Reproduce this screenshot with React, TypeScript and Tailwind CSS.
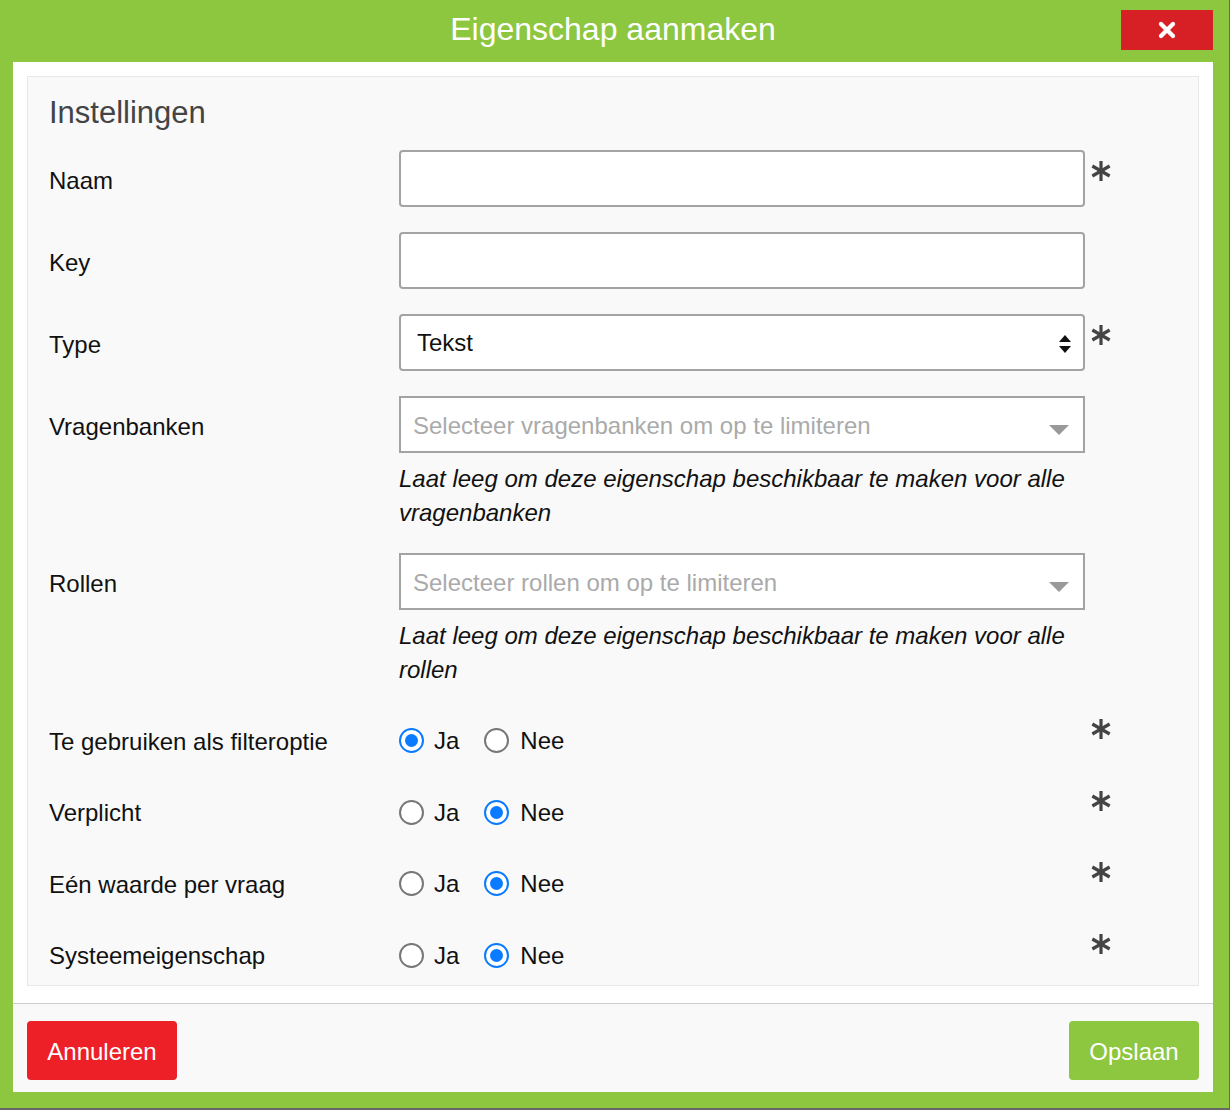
import React from 'react'

const font = { fontFamily: '"Liberation Sans", Arial, sans-serif' }

function Asterisk({ className = '' }: { className?: string }) {
  return (
    <svg width="20" height="20" viewBox="0 0 20 20" className={`shrink-0 ${className}`}>
      <g stroke="#444" strokeWidth="3.2">
        <line x1="10" y1="0" x2="10" y2="20" />
        <line x1="1.34" y1="5" x2="18.66" y2="15" />
        <line x1="1.34" y1="15" x2="18.66" y2="5" />
      </g>
    </svg>
  )
}

function Radio({ checked }: { checked: boolean }) {
  if (checked) {
    return (
      <span className="w-[25px] h-[25px] rounded-full border-[2.5px] border-[#0a7aff] bg-white flex items-center justify-center shrink-0">
        <span className="w-[13px] h-[13px] rounded-full bg-[#0a7aff]" />
      </span>
    )
  }
  return <span className="w-[25px] h-[25px] rounded-full border-2 border-[#777] bg-white shrink-0" />
}

function RadioRow({ label, yes }: { label: string; yes: boolean }) {
  return (
    <div className="flex h-[47px]">
      <div className="w-[350px] flex items-center pt-[2px] text-[24px] text-[#111]">{label}</div>
      <div className="w-[686px] flex items-center text-[24px] text-[#111]">
        <Radio checked={yes} />
        <span className="ml-[10px] mr-[25px] pt-[1px]">Ja</span>
        <Radio checked={!yes} />
        <span className="ml-[11px] pt-[1px]">Nee</span>
      </div>
      <Asterisk className="ml-[6px] mt-[2px]" />
    </div>
  )
}

function Select2({ placeholder, help, last }: { placeholder: string; help: string; last: string }) {
  return (
    <div className="w-[686px]">
      <div className="h-[57px] border-2 border-[#a3a3a3] bg-white flex items-center justify-between pl-[12px] pr-[14px]">
        <span className="text-[24px] text-[#aaa] pt-[3px]">{placeholder}</span>
        <svg width="20" height="10" viewBox="0 0 20 10" className="mt-[10px]">
          <polygon points="0,0 20,0 10,10" fill="#999" />
        </svg>
      </div>
      <p className="mt-[9px] text-[24px] leading-[34px] italic text-[#111]">
        {help}
        <br />
        {last}
      </p>
    </div>
  )
}

export default function App() {
  return (
    <div className="w-[1230px] h-[1110px] bg-[#666]" style={font}>
      <div className="w-[1229px] h-[1108px] bg-[#8dc63f] flex flex-col pl-[13px] pr-[16px] pb-[16px]">
        <header className="relative h-[62px] flex items-center justify-center pb-[4px]">
          <h1 className="text-[32px] text-white">Eigenschap aanmaken</h1>
          <button className="absolute right-0 top-[10px] w-[92px] h-[40px] bg-[#d71f26] flex items-center justify-center">
            <svg width="18" height="18" viewBox="0 0 18 18">
              <g stroke="white" strokeWidth="4.2" strokeLinecap="round">
                <line x1="3" y1="3" x2="15" y2="15" />
                <line x1="15" y1="3" x2="3" y2="15" />
              </g>
            </svg>
          </button>
        </header>

        <div className="flex-1 bg-white flex flex-col">
          <div className="pt-[14px] px-[14px] pb-[17px]">
            <div className="border border-[#e8e8e8] bg-[#f9f9f9] pl-[21px] pt-[18px] pb-[6px]">
              <h2 className="text-[31px] leading-[36px] text-[#444] mb-[19px]">Instellingen</h2>

              <div className="flex flex-col gap-[25px]">
                <div className="flex">
                  <div className="w-[350px] h-[57px] flex items-center pt-[5px] text-[24px] text-[#111]">Naam</div>
                  <div className="w-[686px] h-[57px] border-2 border-[#a3a3a3] rounded-[4px] bg-white" />
                  <Asterisk className="ml-[6px] mt-[11px]" />
                </div>

                <div className="flex">
                  <div className="w-[350px] h-[57px] flex items-center pt-[5px] text-[24px] text-[#111]">Key</div>
                  <div className="w-[686px] h-[57px] border-2 border-[#a3a3a3] rounded-[4px] bg-white" />
                </div>

                <div className="flex">
                  <div className="w-[350px] h-[57px] flex items-center pt-[5px] text-[24px] text-[#111]">Type</div>
                  <div className="w-[686px] h-[57px] border-2 border-[#a3a3a3] rounded-[4px] bg-white flex items-center justify-between pl-[16px] pr-[11px]">
                    <span className="text-[24px] text-[#111] pt-[1px]">Tekst</span>
                    <svg width="14" height="20" viewBox="0 0 14 20" className="mt-[3px]">
                      <polygon points="7,1 13,8 1,8" fill="#111" />
                      <polygon points="1,12 13,12 7,19" fill="#111" />
                    </svg>
                  </div>
                  <Asterisk className="ml-[6px] mt-[11px]" />
                </div>

                <div className="flex">
                  <div className="w-[350px] h-[57px] flex items-center pt-[5px] text-[24px] text-[#111]">Vragenbanken</div>
                  <Select2
                    placeholder="Selecteer vragenbanken om op te limiteren"
                    help="Laat leeg om deze eigenschap beschikbaar te maken voor alle"
                    last="vragenbanken"
                  />
                </div>

                <div className="flex -mt-[2px]">
                  <div className="w-[350px] h-[57px] flex items-center pt-[5px] text-[24px] text-[#111]">Rollen</div>
                  <Select2
                    placeholder="Selecteer rollen om op te limiteren"
                    help="Laat leeg om deze eigenschap beschikbaar te maken voor alle"
                    last="rollen"
                  />
                </div>

                <div className="flex flex-col gap-[24.5px] mt-[5px]">
                  <RadioRow label="Te gebruiken als filteroptie" yes={true} />
                  <RadioRow label="Verplicht" yes={false} />
                  <RadioRow label="Eén waarde per vraag" yes={false} />
                  <RadioRow label="Systeemeigenschap" yes={false} />
                </div>
              </div>
            </div>
          </div>

          <footer className="flex-1 border-t border-[#ccc] bg-[#f9f9f9] flex items-start justify-between px-[14px] pt-[17px]">
            <button className="h-[59px] w-[150px] pt-[3px] rounded-[4px] bg-[#ed1f27] text-white text-[24px]">Annuleren</button>
            <button className="h-[59px] w-[130px] pt-[3px] rounded-[4px] bg-[#8dc63f] text-white text-[24px]">Opslaan</button>
          </footer>
        </div>
      </div>
    </div>
  )
}
